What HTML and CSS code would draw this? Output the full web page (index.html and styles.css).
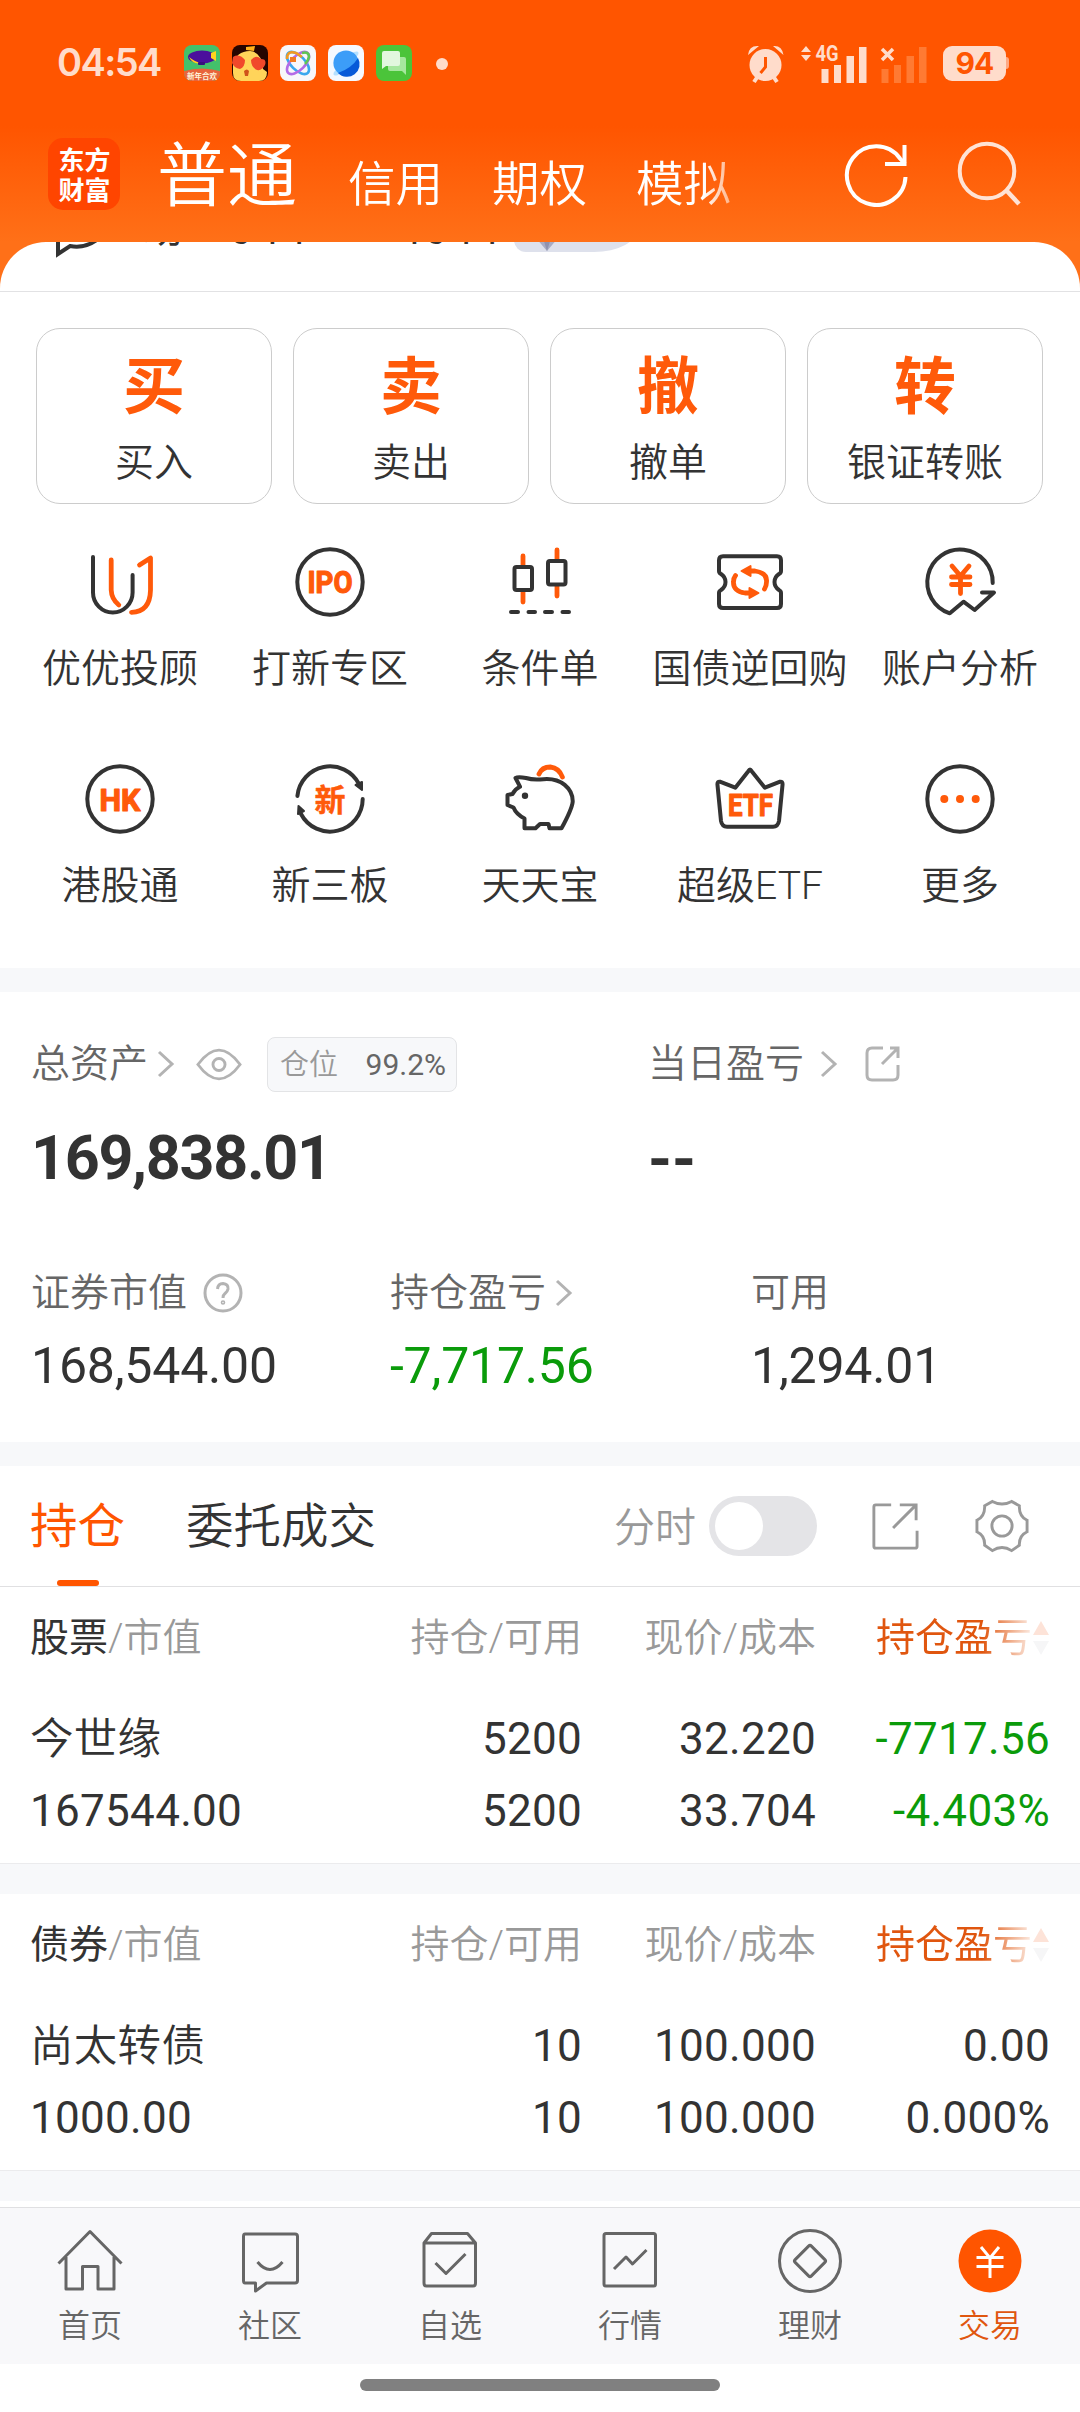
FILE: index.html
```html
<!DOCTYPE html>
<html lang="zh-CN">
<head>
<meta charset="utf-8">
<title>东方财富 - 交易</title>
<link rel="stylesheet" href="styles.css">
</head>
<body>
<div class="top">
  <div class="status">
    <span class="time">04:54</span>
    <div class="apps">
      <svg width="36" height="36" viewBox="0 0 36 36"><rect width="36" height="36" rx="8" fill="#43c16b"/><ellipse cx="18" cy="12" rx="14" ry="6.5" fill="#4b0f9c"/><path d="M27 8l5-2v10l-5-3z" fill="#ffd21e"/><path d="M5 12q4 8 12 6q-6-1-12-6z" fill="#ffd21e"/><rect x="14" y="17" width="7" height="3" rx="1" fill="#39107d"/><path d="M0 26q18-5 36 0v2a8 8 0 0 1-8 8H8a8 8 0 0 1-8-8z" fill="#e8643c"/><text x="18" y="34" text-anchor="middle" class="app-caption">新年合欢</text></svg>
      <svg width="36" height="36" viewBox="0 0 36 36"><rect width="36" height="36" rx="8" fill="#260500"/><path d="M1 20Q4 6 18 6Q30 7 31 24l4 3q0 9-8 9H9q-8 0-8-8z" fill="#ffd45a"/><path d="M14 2l9-1-1 5-8-1z" fill="#ffb21c"/><path d="M1 12q6-4 12 3q0 7-5 9q-6-1-8-6zM19 15q5-6 10-1q6 0 4 6q-3 6-8 5q-6-3-6-10z" fill="#f1482b"/><path d="M12 26q3-3 5 0l-1 5h-3z" fill="#d0531a"/></svg>
      <svg width="36" height="36" viewBox="0 0 36 36"><rect width="36" height="36" rx="8" fill="#f7f7fa"/><g fill="none" stroke-width="2.6"><ellipse cx="18" cy="18" rx="14" ry="7" transform="rotate(45 18 18)" stroke="#3aa7ee"/><ellipse cx="18" cy="18" rx="14" ry="7" transform="rotate(-45 18 18)" stroke="#b36be6"/><path d="M7 14q0-9 9-6l6 4" stroke="#f39a21"/><path d="M22 8q7-2 7 4q-1 4-4 7" stroke="#5fc653"/></g><rect x="10" y="12" width="6" height="5" fill="#f27a22"/></svg>
      <svg width="36" height="36" viewBox="0 0 36 36"><rect width="36" height="36" rx="8" fill="#f5f9ff"/><path d="M26 7q6-2 4 3L10 30q-6 2-4-3z" fill="#b5e0ff"/><circle cx="18" cy="18" r="12.6" fill="#3c9df8"/><path d="M30 13a12.6 12.6 0 0 1-20 15q14-5 20-15z" fill="#0759d8"/></svg>
      <svg width="36" height="36" viewBox="0 0 36 36"><rect width="36" height="36" rx="8" fill="#4bc43a"/><path d="M12 12h16q2 0 2 2v16l-4-4H14q-2 0-2-2z" fill="#a6e79e"/><path d="M8 6h14q2 0 2 2v11q0 2-2 2H10l-4 3V8q0-2 2-2z" fill="#e2f7de"/></svg>
    </div>
    <i class="dot"></i>
    <div class="signals">
      <svg width="38" height="40" viewBox="0 0 38 40" fill="#ffdccb"><circle cx="18.500" cy="21" r="16"/><path d="M1 11Q2 1 12 2zM36.500 11Q35 1 26 2z"/><path d="M7 38l4-6M30 38l-4-6" stroke="#ffdccb" stroke-width="4"/><path d="M18.500 13v10l-5 6" fill="none" stroke="#ff5500" stroke-width="3"/></svg>
      <svg width="128" height="40" viewBox="0 0 128 40" fill="#ffdccb"><path d="M1 8l5-6 5 6zM1 11l5 6 5-6z"/><text x="15.500" y="17" class="net" textLength="23" lengthAdjust="spacingAndGlyphs">4G</text><path d="M21.500 25h7v14h-7zM34 21h7v18h-7zM46.500 12h7.500v27h-7.500zM59 3h7.500v36H59z"/><path d="M82 5l11 11M93 5L82 16" stroke="#ffdccb" stroke-width="3.500"/><path d="M81.500 25h7v14h-7zM94 21h7v18h-7zM106.500 12h7.500v27h-7.500zM119 3h7.500v36H119z" fill="#ff7a33"/></svg>
      <span class="battery">94</span>
    </div>
  </div>
  <div class="tabs">
    <div class="logo">东方<br>财富</div>
    <span class="tab-main">普通</span>
    <div class="tab-list"><span>信用</span><span>期权</span><span>模拟</span></div>
    <svg class="refresh" width="66" height="66" viewBox="0 0 66 66" fill="none" stroke="#fff" stroke-width="4"><path d="M61.500 36A29.300 29.300 0 1 1 56 17.500L61 23"/><path d="M60.500 4v19H41"/></svg>
    <svg class="search" width="66" height="66" viewBox="0 0 66 66" fill="none" stroke="#ffe3d5" stroke-width="4"><circle cx="31" cy="31" r="27.300"/><path d="M50 50L63 64" stroke-width="4.500"/></svg>
  </div>
  <div class="notice">
    <div class="notice-row">
      <svg width="46" height="60" viewBox="0 0 46 60" fill="none" stroke="#333" stroke-width="4"><path d="M3 34V54L15 46Q30 49 43 39Q44 10 23 10Q3 12 3 34z"/></svg>
      <span class="n1">助</span><span class="n2">044</span><span class="n3">4044</span>
      <span class="pill"><svg width="22" height="22" viewBox="0 0 22 22"><path d="M0 8h22L11 21z" fill="#a9acc4"/><path d="M7 8h8l-4 13z" fill="#8f92ae"/></svg></span>
    </div>
  </div>
</div>

<section class="actions">
  <div class="action"><b>买</b><span>买入</span></div>
  <div class="action"><b>卖</b><span>卖出</span></div>
  <div class="action"><b>撤</b><span>撤单</span></div>
  <div class="action"><b>转</b><span>银证转账</span></div>
</section>

<section class="grid">
  <div class="item"><svg class="ic" viewBox="0 0 72 72"><path d="M9 11V46.500A19.800 20 0 0 0 48.600 46.500V29"/><path class="o" d="M27.200 14V44Q27.500 53 34.800 59M55.500 19L66.500 12V44Q66 66 47.500 66.300"/></svg><span>优优投顾</span></div>
  <div class="item"><svg class="ic" viewBox="0 0 72 72"><circle cx="36" cy="36" r="32.700"/><text x="13.500" y="47.200" textLength="45" lengthAdjust="spacingAndGlyphs">IPO</text></svg><span>打新专区</span></div>
  <div class="item"><svg class="ic" viewBox="0 0 72 72"><path class="o" d="M19 10v46M53 4v46"/><rect class="w" x="10.500" y="21" width="17.500" height="23" rx="2"/><rect class="w" x="44" y="15" width="17.500" height="23.500" rx="2"/><path d="M7 66h7M24.500 66h6.500M41 66h7M58.500 66h6.500"/></svg><span>条件单</span></div>
  <div class="item"><svg class="ic" viewBox="0 0 72 72"><path d="M9 10.300H63Q67 10.300 67 14.300V25Q67 27 65 28Q60.500 31 60.500 36Q60.500 41 65 44Q67 45 67 47V58Q67 62 63 62H9Q5 62 5 58V47Q5 45 7 44Q11.500 41 11.500 36Q11.500 31 7 28Q5 27 5 25V14.300Q5 10.300 9 10.300z"/><path class="o" d="M36 25H41Q53.500 27 52.500 36Q52.500 40 50.500 43M37 47H31Q19 45 19.500 36Q19.500 32 21.500 29.500"/><path class="of" d="M27.500 25L36.500 20V30zM44.500 47L35.500 42V52z"/></svg><span>国债逆回购</span></div>
  <div class="item"><svg class="ic" viewBox="0 0 72 72"><path d="M68.700 37A32.700 32.700 0 1 0 25.800 67.300L39.500 55.700L50.600 64L70 46.500H58"/><path class="o" d="M28 20L36.500 30L45 20M36.500 30V47.500M27.500 31H46M27.500 38.500H46"/></svg><span>账户分析</span></div>
  <div class="item"><svg class="ic" viewBox="0 0 72 72"><circle cx="36" cy="36" r="32.700"/><text x="15.500" y="47.500" textLength="41" lengthAdjust="spacingAndGlyphs">HK</text></svg><span>港股通</span></div>
  <div class="item"><svg class="ic" viewBox="0 0 72 72"><path d="M3.400 33A32.700 32.700 0 0 1 65 21M68.700 36A32.700 32.700 0 0 1 7 51"/><path class="df" d="M61.500 22L68 19V27zM4 51L10 48L4.500 43z"/><text x="20.500" y="48" class="xin">新</text></svg><span>新三板</span></div>
  <div class="item"><svg class="ic" viewBox="0 0 72 72"><path class="o" d="M35 11Q38 4 46.300 4Q55 5 58.400 14"/><path class="w" d="M16 23.700L11.500 15Q14 13.500 22 15Q28 17 36 16.500C58 13 69 27 68.700 38.700Q68 46 57.500 65.300H45.500L44.500 61H36L31.500 65.300H20.500V55.500Q12 51 9.500 44.500L3.500 42V32L8.500 31Q11 26 16 23.700z"/><circle class="df" cx="21" cy="32.700" r="2.200"/></svg><span>天天宝</span></div>
  <div class="item"><svg class="ic" viewBox="0 0 72 72"><path d="M34.500 8Q36 5 37.500 8L50.900 24.700L65.500 18.800Q69 18 68.500 22L65 58Q64 63.700 59 63.700H13Q8 63.700 7 58L3.500 22Q3 18 6.500 18.800L21.300 24.700z"/><text x="14" y="53" textLength="45" lengthAdjust="spacingAndGlyphs">ETF</text></svg><span>超级ETF</span></div>
  <div class="item"><svg class="ic" viewBox="0 0 72 72"><circle cx="36" cy="36" r="32.700"/><g class="of"><circle cx="20.300" cy="36" r="3"/><circle cx="36" cy="36" r="3"/><circle cx="51.700" cy="36" r="3"/></g></svg><span>更多</span></div>
</section>

<div class="gap"></div>

<section class="assets">
  <div class="total">
    <div class="half">
      <div class="label"><span>总资产</span><svg class="chev" viewBox="0 0 18 28"><path d="M2 2l13 12L2 26"/></svg><svg class="eye" viewBox="0 0 48 34"><path d="M2 17Q24-13 46 17Q24 47 2 17z"/><circle cx="24" cy="17" r="6.300"/></svg><span class="badge">仓位<em>99.2%</em></span></div>
      <strong>169,838.01</strong>
    </div>
    <div class="half">
      <div class="label"><span>当日盈亏</span><svg class="chev c2" viewBox="0 0 18 28"><path d="M2 2l13 12L2 26"/></svg><svg class="open" viewBox="0 0 36 36"><path d="M18 2H7Q2 2 2 7V29Q2 34 7 34H28Q33 34 33 29V19M25 2H33V12M33 2L17 18"/></svg></div>
      <strong class="none">--</strong>
    </div>
  </div>
  <div class="detail">
    <div><div class="label"><span>证券市值</span><svg class="help" viewBox="0 0 40 40"><circle cx="20" cy="20" r="18"/><path d="M14.500 16Q15 10.500 20 10.500Q25.500 11 25 16Q24.500 18.500 22 20.500Q20 22 20 25"/><circle cx="20" cy="29.500" r=".8"/></svg></div><span class="val">168,544.00</span></div>
    <div><div class="label"><span>持仓盈亏</span><svg class="chev c3" viewBox="0 0 18 28"><path d="M2 2l13 12L2 26"/></svg></div><span class="val green">-7,717.56</span></div>
    <div><div class="label"><span>可用</span></div><span class="val">1,294.01</span></div>
  </div>
</section>

<div class="gap"></div>

<div class="hold-tabs">
  <span class="hold active">持仓</span>
  <span class="hold">委托成交</span>
  <span class="fs">分时</span>
  <i class="toggle"></i>
  <svg class="share" viewBox="0 0 50 50"><path d="M21 3H5Q3 3 3 5V46Q3 48 5 48H46Q48 48 48 46V30M30 3H47V19M47 3L23 27"/></svg>
  <svg class="gear" viewBox="0 0 56 56"><path d="M18 2.500Q28 8 38 2.500L46 7Q45.500 18 54 22V34Q45.500 38 46 48L38 53.500Q28 47 18 53.500L10 48Q10.500 38 2 34V22Q10.500 18 10 7z"/><circle cx="28" cy="28" r="10.500"/></svg>
</div>

<section class="table">
  <div class="row head"><span><b>股票</b>/市值</span><span>持仓/可用</span><span>现价/成本</span><span class="sort"><span>持仓盈亏</span><svg width="18" height="36" viewBox="0 0 18 36"><path d="M1 15L9 1l8 14z" fill="#fde3d8"/><path d="M1 21L9 35l8-14z" fill="#f6f6f7"/></svg></span></div>
  <div class="row"><span class="name">今世缘</span><span>5200</span><span>32.220</span><span class="green">-7717.56</span></div>
  <div class="row"><span>167544.00</span><span>5200</span><span>33.704</span><span class="green">-4.403%</span></div>
</section>
<div class="gap lined"></div>
<section class="table">
  <div class="row head"><span><b>债券</b>/市值</span><span>持仓/可用</span><span>现价/成本</span><span class="sort"><span>持仓盈亏</span><svg width="18" height="36" viewBox="0 0 18 36"><path d="M1 15L9 1l8 14z" fill="#fde3d8"/><path d="M1 21L9 35l8-14z" fill="#f6f6f7"/></svg></span></div>
  <div class="row"><span class="name">尚太转债</span><span>10</span><span>100.000</span><span>0.00</span></div>
  <div class="row"><span>1000.00</span><span>10</span><span>100.000</span><span>0.000%</span></div>
</section>
<div class="gap lined"></div>

<nav class="bottom">
  <div><svg viewBox="0 0 72 72"><path d="M4.500 37.500L36 5.500L67.500 37.500M12 31V63H28.500V40.500H44V63H60V31"/></svg><span>首页</span></div>
  <div><svg viewBox="0 0 72 72"><path d="M11 8H61Q63.500 8 63.500 10.500V54.500Q63.500 57 61 57H32.500L21.500 65V57H11Q9.500 57 9.500 54.500V10.500Q9.500 8 11 8zM23.500 36Q36 51 48.500 36"/></svg><span>社区</span></div>
  <div><svg viewBox="0 0 72 72"><path d="M10 17L17.500 7.500H53.500L61.500 17V57Q61.500 60 59 60H12.500Q10 60 10 57zM10 17H61.500M21.500 37L32 47.500L51.500 28"/></svg><span>自选</span></div>
  <div><svg viewBox="0 0 72 72"><rect x="10" y="7.500" width="51.500" height="52.500" rx="2"/><path d="M20 43L32 31L38.500 38L52.500 24"/></svg><span>行情</span></div>
  <div><svg viewBox="0 0 72 72"><circle cx="36" cy="35" r="30.500"/><rect x="24.500" y="23.500" width="23" height="23" rx="2" transform="rotate(45 36 35)"/></svg><span>理财</span></div>
  <div class="on"><svg viewBox="0 0 72 72"><circle cx="36" cy="35" r="31.500"/><path d="M27 21L36 32L45 21M36 32V52M22.500 31.500H49.500M22.500 40.500H49.500"/></svg><span>交易</span></div>
</nav>
<div class="home"><i></i></div>
</body>
</html>
```
FILE: styles.css
```css
* { box-sizing: border-box; }
body {
  margin: 0;
  width: 1080px;
  height: 2412px;
  overflow: hidden;
  background: #fff;
  color: #333;
  font-family: Roboto, "Noto Sans CJK SC", sans-serif;
  font-size: 39px;
  line-height: 48px;
  white-space: nowrap;
}
svg { display: block; flex: none; }
i, em { font-style: normal; }
.green { color: #0a9b0a; }

.top { background: linear-gradient(#ff5500 126px, #ff7018 242px); height: 292px; }
.status { display: flex; height: 126px; padding: 43px 74px 0 57px; }
.time { width: 127px; padding-top: 1px; font: 600 38px/36px Inter, sans-serif; letter-spacing: -1.6px; color: #ffdccb; }
.apps { display: flex; gap: 12px; padding-top: 2px; height: 38px; }
.app-caption { font-size: 7.500px; font-weight: 700; fill: #fff3d8; }
.dot { width: 12px; height: 12px; border-radius: 50%; background: #ffdccb; margin: 15px 0 0 24px; }
.signals { display: flex; margin-left: auto; }
.signals svg { margin-top: 1px; }
.signals svg:nth-child(2) { margin-left: 15px; }
.net { font-size: 22px; font-weight: 700; }
.battery { position: relative; width: 63px; height: 35px; margin: 3px 0 0 15px; border-radius: 9px; background: #ffdccb; color: #ff5500; font: 700 30px/35px Inter, sans-serif; letter-spacing: -1px; text-align: center; }
.battery::after { content: ""; position: absolute; right: -3px; top: 11px; width: 3px; height: 12px; border-radius: 0 3px 3px 0; background: #ffa984; }

.tabs { display: flex; height: 116px; padding: 12px 54px 0 48px; color: #fff; font-weight: 350; }
.logo { width: 72px; height: 72px; padding: 6px 0 0 1px; border-radius: 15px; background: #ff4500; font: 700 26px/30px "Noto Sans CJK SC", sans-serif; text-align: center; }
.tab-main { margin-left: 37px; width: 191px; font-size: 70px; line-height: 78px; }
.tab-list { display: flex; gap: 49px; width: 390px; height: 76px; padding-top: 23px; font-size: 47.5px; -webkit-mask-image: linear-gradient(90deg, #000 355px, transparent 412px); }
.refresh { margin: 3px 0 0 106px; }
.search { margin: 2px 0 0 46px; }

.notice { height: 50px; overflow: hidden; background: #fff; border-radius: 46px 46px 0 0; border-bottom: 1px solid #e2e2e4; }
.notice-row { display: flex; margin-top: -42px; padding-left: 55px; font-size: 39px; }
.n1 { margin: 5px 0 0 43px; width: 86px; }
.n2 { margin-top: 7px; letter-spacing: 5px; width: 169px; }
.n3 { margin-top: 7px; letter-spacing: 4px; width: 115px; }
.pill { width: 124px; height: 52px; padding: 30px 0 0 22px; background: #dee1ec; border-radius: 8px 0 44px 12px / 8px 0 24px 12px; }

.actions { display: flex; gap: 21px; padding: 36px 37px 0 36px; height: 212px; }
.action { flex: 1; height: 176px; border: 1px solid #ccc; border-radius: 24px; text-align: center; font-weight: 350; }
.action b { display: block; padding-top: 21px; font-size: 62px; line-height: 76px; font-weight: 700; color: #ff5a0a; }
.action span { display: block; padding-top: 13px; }

.grid { display: grid; grid-template-columns: repeat(5, 210px); grid-auto-rows: 217px; padding: 42px 15px 0; height: 464px; font-weight: 350; }
.item { display: flex; flex-direction: column; align-items: center; gap: 27px; }
.ic { width: 72px; height: 72px; fill: none; stroke: #333; stroke-width: 4; stroke-linecap: round; stroke-linejoin: round; overflow: visible; }
.ic .o { stroke: #ff5a0a; stroke-width: 4.800; }
.ic .of { fill: #ff5a0a; stroke: #ff5a0a; stroke-width: 2; }
.ic .df { fill: #333; stroke-width: 2; }
.ic .w { fill: #fff; }
.ic text { font: 700 31px Roboto, "Noto Sans CJK SC", sans-serif; fill: #ff5a0a; stroke: #ff5a0a; stroke-width: 1.2; }
.ic .xin { font-size: 31px; stroke-width: .5; }

.gap { height: 24px; background: #f7f8fa; }
.gap.lined { height: 31px; border-top: 1px solid #ebebed; }

.assets { height: 450px; padding: 48px 31px 0; color: #666; font-weight: 350; }
.total { display: flex; height: 225px; }
.half:first-child { width: 617px; }
.label { display: flex; align-items: center; height: 48px; }
.assets svg { fill: none; stroke: #b3b3b3; stroke-width: 3; }
.chev { width: 18px; height: 28px; margin-left: 9px; }
.eye { width: 46px; height: 33px; margin-left: 21px; }
.badge { display: flex; justify-content: space-between; width: 190px; height: 55px; margin-left: 25px; padding: 0 10px 0 12px; border: 1px solid #e3e4e6; border-radius: 8px; background: #f7f8fa; font-size: 29px; line-height: 54px; color: #999; }
.badge em { font-size: 30px; font-weight: 400; color: #666; }
.c2 { margin-left: 16px; }
.c3 { margin-left: 9px; }
.open { width: 36px; height: 36px; margin-left: 27px; }
.help { width: 40px; height: 40px; margin-left: 16px; }
strong { display: block; margin-top: 34px; font-size: 61px; line-height: 72px; letter-spacing: -1.3px; font-weight: 700; color: #333; }
strong.none { margin-top: 35px; letter-spacing: 0; }
.detail { display: grid; grid-template-columns: 359px 361px auto; margin-top: 4px; }
.val { display: block; margin-top: 19px; font-size: 50px; line-height: 60px; font-weight: 400; letter-spacing: -.2px; color: #333; }
.val.green { color: #0a9b0a; }

.hold-tabs { display: flex; align-items: center; height: 121px; padding: 0 50px 0 30px; border-bottom: 1px solid #e0e0e2; }
.hold { height: 120px; font-size: 47.5px; line-height: 123px; margin-right: 61px; font-weight: 350; }
.active { position: relative; color: #ff5500; font-weight: 400; }
.active::after { content: ""; position: absolute; left: 27px; bottom: 0; width: 42px; height: 6px; border-radius: 3px; background: #ff5500; }
.fs { margin: 3px 0 0 auto; font-size: 41px; font-weight: 350; color: #999; }
.toggle { width: 108px; height: 60px; margin-left: 13px; border-radius: 30px; background: #e4e4e7; }
.toggle::after { content: ""; display: block; width: 48px; height: 48px; margin: 6px; border-radius: 50%; background: #fff; }
.hold-tabs svg { fill: none; stroke: #999; stroke-width: 3; }
.share { width: 48px; height: 48px; margin-left: 54px; }
.gear { width: 56px; height: 54px; margin-left: 55px; }

.table { height: 276px; padding: 26px 30px 0; }
.row { display: grid; grid-template-columns: 1fr 230px 234px 234px; height: 72px; font-size: 44px; line-height: 72px; letter-spacing: .3px; }
.row > span:nth-child(n+2) { text-align: right; }
.name { padding-top: 1px; font-size: 43.500px; font-weight: 350; }
.row.head { height: 90px; font-size: 39px; line-height: 50px; font-weight: 350; letter-spacing: 0; color: #999; }
.head b { font-weight: 400; color: #333; }
.sort { display: flex; justify-content: flex-end; align-items: center; height: 50px; color: #e0560f; font-weight: 400; }
.sort span { background: linear-gradient(90deg, #e0560f 68%, #fff 104%); -webkit-background-clip: text; color: transparent; }

.bottom { display: grid; grid-template-columns: repeat(6, 180px); height: 157px; margin-top: 6px; border-top: 1px solid #e0e0e2; background: #f8f8fa; color: #666; font-size: 32px; line-height: 40px; font-weight: 350; }
.bottom div { display: flex; flex-direction: column; align-items: center; padding-top: 18px; }
.bottom svg { width: 72px; height: 72px; margin-bottom: 8px; fill: none; stroke: #666; stroke-width: 3; stroke-linejoin: round; }
.bottom .on { color: #e0560f; }
.on circle { fill: #ff5500; stroke: none; }
.on path { stroke: #fff; stroke-linejoin: miter; }
.home { height: 48px; padding-top: 15px; background: #fff; }
.home i { display: block; width: 360px; height: 12px; margin: 0 auto; border-radius: 6px; background: #808080; }
```
